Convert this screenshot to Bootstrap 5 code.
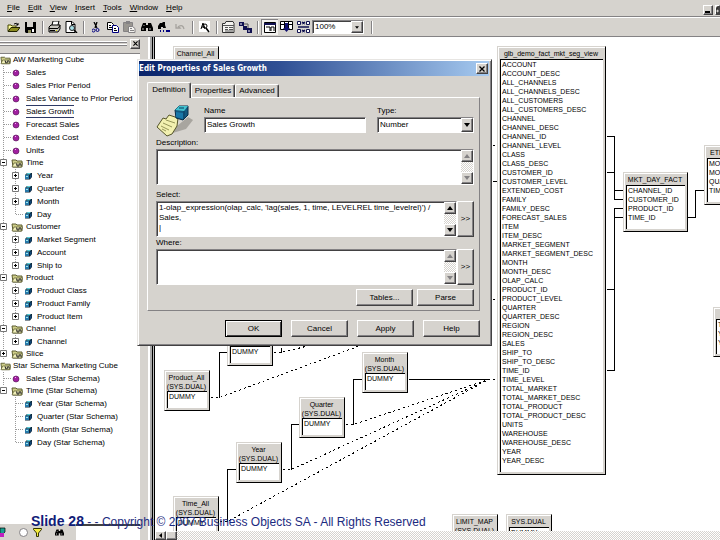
<!DOCTYPE html>
<html lang="en">
<head>
<meta charset="utf-8">
<meta name="viewport" content="width=device-width, initial-scale=1">
<title>Edit Properties of Sales Growth</title>
<link href="https://cdn.jsdelivr.net/npm/bootstrap@5.3.0/dist/css/bootstrap.min.css" rel="stylesheet">
<style>
:root{--face:#d6d3ce;--shade:#848284;--dark:#424142}
body{font:8px/12px "Liberation Sans",Arial,sans-serif;color:#000;background:var(--face);overflow:hidden}
ul{list-style:none;margin:0;padding:0}
svg{display:block;flex:none}
.menubar{height:17px;padding:0 0 0 7px;gap:8px;border-bottom:1px solid var(--shade)}
.menubar a{color:#000;text-decoration:none}
.menubar a::first-letter{text-decoration:underline}
.win-ctl{gap:2px}
.raised{background:var(--face);border:1px solid;border-color:#fff var(--dark) var(--dark) #fff;box-shadow:inset -1px -1px var(--shade);border-radius:0;padding:0;color:#000;display:flex;align-items:center;justify-content:center;font-size:8px;line-height:10px}
.win-ctl .raised{width:10px;height:10px}
.win-ctl .clipped{width:5px;overflow:hidden}
.tools{height:20px;padding-left:5px;border-top:1px solid #fff;border-bottom:1px solid var(--shade)}
.tool{width:17px;height:16px;border:0;padding:0;background:none;display:flex;align-items:center;justify-content:center}
.tool.on{background:#f2f1ee;box-shadow:inset 1px 1px var(--shade)}
.tsep{width:7px;height:13px;background:linear-gradient(90deg,var(--shade) 50%,#fff 50%) center/2px 100% no-repeat}
.sunken{background:#fff;border:1px solid;border-color:var(--shade) #fff #fff var(--shade);box-shadow:inset 1px 1px var(--dark)}
.sunken input,.sunken select,.sunken textarea{border:0;border-radius:0;background:transparent;padding:1px 2px;font-size:8px;line-height:10px;color:#000;appearance:none;resize:none;outline:0;min-width:0;min-height:0;box-shadow:none;overflow:hidden}
.zoomsel{width:52px;height:14px}
.arrow-btn{width:12px;flex:none}
.side{width:140px;flex:none}
.side-head{height:16px;gap:3px;padding:0 0 3px}
.grip{height:5px;border-top:1px solid #fff;border-bottom:1px solid var(--shade);box-shadow:inset 0 -1px #fff,inset 0 1px var(--shade)}
.side-head .raised{width:10px;height:10px}
.tree{background:#fff;border-top:1px solid var(--shade)}
.tree-row{display:flex;align-items:center;height:13px;white-space:nowrap}
.folder-row{height:12px}
.root-row{gap:2px}
.tree .slot{width:8px;flex:none}
.tree .pic{width:12px;flex:none;margin:0 3px}
.tree .sub .pic{width:8px;margin:0 5px 0 4px}
.tree .lvl{background:repeating-linear-gradient(#999 0 1px,#fff 1px 2px) 3px 0/1px 100% no-repeat}
.tree .sub{margin-left:12px;background:repeating-linear-gradient(#999 0 1px,transparent 1px 2px) 3px 0/1px calc(100% - 6px) no-repeat}
.leaf{height:1px;margin-left:4px;margin-right:-4px;background:repeating-linear-gradient(90deg,#999 0 1px,#fff 1px 2px)}
.chosen{border:solid #2d3a66;border-width:1px 0;line-height:11px}
.sidetabs{height:16px}
.sidetabs .strip{width:76px;background:var(--face);gap:5px}
.sidetabs .rest{background:#fff;border-top:2px solid var(--dark)}
.splitter{width:15px;flex:none;background:linear-gradient(90deg,var(--face) 0 8px,#fff 8px 10px,#aaa 10px 12px,#000 12px 13px,#bbb 13px 14px,#000 14px)}
.canvas{background:#fff}
.free{position:absolute}
.tbl{background:var(--face);border:1px solid;border-color:#d6d3ce #000 #000 #d6d3ce;box-shadow:inset 1px 1px #fff;padding:2px 2px 2px 1px;width:46px;font-size:7px;line-height:9px;text-align:center;white-space:nowrap;overflow:hidden}
.tbl h2{font-size:7px;line-height:9px;font-weight:400;margin:0;min-height:9px}
.tbl h2.one{padding-bottom:1px}
.tbl ul{background:#fff;border-top:1px solid #000;border-left:1px solid #000;text-align:left;padding:0 0 7px 1px;margin-left:1px}
.n-view{left:342px;top:9px;width:109px}
.n-mkt{left:468px;top:135px;width:65px}
.n-etd{left:549px;top:108px;width:64px}
.n-side{left:558px;top:270px;width:64px}
.n-channel{left:18px;top:9px}
.n-product{left:72px;top:288px}
.n-prodall{left:9px;top:333px}
.n-month{left:207px;top:315px}
.n-quarter{left:144px;top:360px}
.n-year{left:81px;top:405px}
.n-timeall{left:18px;top:459px}
.n-limit{left:297px;top:477px}
.n-dual{left:351px;top:477px}
.checker{background:repeating-conic-gradient(#d6d3ce 0 25%,#fff 0 50%) 0 0/2px 2px}
.hscroll{height:9px}
.hscroll .raised{width:11px}
.dlg{position:absolute;left:137px;top:59px;width:355px;background:var(--face);border:1px solid;border-color:#e7e5e2 var(--dark) var(--dark) #e7e5e2;box-shadow:inset 1px 1px #fff,inset -1px -1px var(--shade);padding:1px 2px 8px 1px}
.dlg-title{height:15px;background:linear-gradient(90deg,#0a246a,#2f4f94 40%,#a6caf0);color:#fff;padding:0 1px 0 0}
.dlg-title h1{font:bold 8px/15px "DejaVu Sans Condensed","DejaVu Sans",sans-serif;margin:0}
.dlg-title .raised{width:12px;height:11px}
.dlg-tabs{padding:6px 0 0 8px}
.dlg-tabs button{border:1px solid;border-color:#fff var(--dark) transparent #fff;border-bottom:0;box-shadow:inset -1px 0 var(--shade);border-radius:2px 2px 0 0;background:var(--face);padding:0;height:13px;width:44px;font-size:8px;line-height:12px;color:#000}
.dlg-tabs .cur{height:16px;margin-bottom:-1px;padding-bottom:2px;z-index:1;position:relative}
.pane{margin:0 9px 0 8px;border:1px solid;border-color:#fff var(--shade) var(--shade) #fff;padding:7px 5px 4px 8px}
.pane label{display:block;line-height:12px}
.line-field{height:16px}
.type-col{width:97px;margin-left:11px}
.area{height:36px}
.vbar{width:12px;flex:none}
.vbar .raised{height:12px;width:12px}
.more{width:17px}
.push{width:57px;height:17px}
.acts{padding:9px 9px 0 0;gap:9px}
.okbtn{border-color:#000;box-shadow:inset 1px 1px #fff,inset -1px -1px var(--dark)}
.credit{position:absolute;left:31px;bottom:10px;margin:0;color:#1b2a80;font-size:12px;line-height:16px;white-space:nowrap}
.credit strong{font-size:14px;color:#101c78}
</style>
<script src="https://cdn.jsdelivr.net/npm/bootstrap@5.3.0/dist/js/bootstrap.bundle.min.js"></script>
</head>
<body class="d-flex flex-column min-vh-100 position-relative">
<svg width="0" height="0" class="position-absolute" aria-hidden="true">
  <defs>
    <symbol id="folder" viewBox="0 0 12 10"><path d="M1 2h4l1 1h5v6H2z" fill="#cfcf8a" stroke="#5c5c30"/><path d="M3 5h9l-2 4H1z" fill="#f0efb8" stroke="#55552a" stroke-width=".7"/><path d="M5 6h1v2h2V6h2v2" fill="none" stroke="#222"/></symbol>
    <symbol id="ball" viewBox="0 0 12 10"><circle cx="5" cy="5" r="3" fill="#a020a0" stroke="#501050" stroke-width=".6"/><path d="M4 3h1v1H4z" fill="#ffb0ff"/></symbol>
    <symbol id="cube" viewBox="0 0 8 8"><path d="M1 3l2-2h5v4L6 7.500H1z" fill="#123"/><path d="M2 2.500L3.500 1H7L5.500 2.500z" fill="#5cd0dc"/><path d="M1 3h4v4H1z" fill="#2878a8"/><path d="M2 4h2v1H2z" fill="#9fe8ee"/><path d="M6 3l1.500-1v3L6 6.500z" fill="#104878"/></symbol>
    <symbol id="plus" viewBox="0 0 8 8"><path d="M.5.5h6v6h-6z" fill="#fff" stroke="#777"/><path d="M2 3.500h3M3.500 2v3" stroke="#000"/></symbol>
    <symbol id="minus" viewBox="0 0 8 8"><path d="M.5.5h6v6h-6z" fill="#fff" stroke="#777"/><path d="M2 3.500h3" stroke="#000"/></symbol>
    <symbol id="down" viewBox="0 0 6 4"><path d="M0 0h6L3 4z"/></symbol>
    <symbol id="up" viewBox="0 0 6 4"><path d="M0 4h6L3 0z"/></symbol>
    <symbol id="x" viewBox="0 0 6 6"><path d="M.5.5l5 5m0-5l-5 5" stroke="#000" stroke-width="1.300"/></symbol>
    <symbol id="binoc" viewBox="0 0 12 10"><path d="M2 1h3v2h2V1h3l2 5v3H7V6H5v3H0V6z"/><path d="M2 6v2M9 6v2M3 3v1" stroke="#fff" stroke-width=".7"/></symbol>
  </defs>
</svg>

<nav class="menubar d-flex align-items-center" aria-label="Main menu">
  <a href="#">File</a><a href="#">Edit</a><a href="#">View</a><a href="#">Insert</a><a href="#">Tools</a><a href="#">Window</a><a href="#">Help</a>
  <div class="win-ctl d-flex ms-auto mt-1">
    <button class="raised" aria-label="Minimize"><svg width="6" height="6"><path d="M0 4h5v2H0z"/></svg></button>
    <button class="raised clipped" aria-label="Restore"><svg width="6" height="8"><path d="M1 3h5v4H1zM2 3V1h4" fill="none" stroke="#000"/></svg></button>
  </div>
</nav>

<div class="tools d-flex align-items-center" role="toolbar" aria-label="Tools">
  <button class="tool" aria-label="Open"><svg width="13" height="11"><path d="M1 9V3h3l1 1h4v2" fill="#ffffa0" stroke="#444400"/><path d="M1 9.500l3-4h9l-3 4z" fill="#8c8c20" stroke="#222200"/><path d="M7 2q3-2 4 1m0 0V1m0 2H9" fill="none" stroke="#000"/></svg></button>
  <button class="tool" aria-label="Save"><svg width="11" height="11"><path d="M0 0h11v11H1L0 10z"/><path d="M2 0h6v5H2z" fill="#d6d3ce"/><path d="M3 8h3v3H3z" fill="#8b8b5a"/><path d="M7 7h2v3H7z" fill="#fff"/></svg></button>
  <span class="tsep"></span>
  <button class="tool" aria-label="Print"><svg width="13" height="12"><path d="M4 4l1-4h6l-1 4" fill="#fff" stroke="#000"/><path d="M1 6l2-2h9v4l-2 3H1z" fill="#c8c6c0" stroke="#000"/><path d="M1 7.500h9l2-3M2 9.500h5" fill="none" stroke="#000"/><path d="M8 9h1v1H8z" fill="#dd0"/></svg></button>
  <button class="tool" aria-label="Preview"><svg width="13" height="12"><path d="M1 .5h6l3 3v8H1z" fill="#fff" stroke="#000"/><path d="M6.500.5v3H10" fill="none" stroke="#000"/><circle cx="7" cy="7" r="2.500" fill="#a8e0e8" stroke="#222"/><path d="M9 9l3 3" stroke="#000" stroke-width="1.500"/></svg></button>
  <span class="tsep"></span>
  <button class="tool" aria-label="Cut"><svg width="8" height="11"><path d="M2 0l3 6M5 0L3 6" stroke="#000" stroke-width="1.300"/><circle cx="1.500" cy="8.500" r="1.500" fill="none" stroke="#000080"/><circle cx="5.500" cy="8" r="1.500" fill="none" stroke="#000080"/></svg></button>
  <button class="tool" aria-label="Copy"><svg width="12" height="11"><path d="M.5.500h4l2 2v5h-6z" fill="#fff" stroke="#000"/><path d="M5.500 3.500h4l2 2v5h-6z" fill="#fff" stroke="#000080"/><path d="M2 3.500h2M2 5.500h3M7 6.500h2M7 8.500h3" stroke="#000"/></svg></button>
  <button class="tool" aria-label="Paste"><svg width="13" height="12"><path d="M.5 1.500h9v9h-9z" fill="#999690" stroke="#848284"/><path d="M3 0h4v3H3z" fill="#848284"/><path d="M5.500 5.500h4l2.500 2v4H5.500z" fill="#f4f3f0" stroke="#848284"/><path d="M7 7.500h2M7 9.500h4" stroke="#848284"/></svg></button>
  <button class="tool" aria-label="Find"><svg width="12" height="10"><use href="#binoc"/></svg></button>
  <button class="tool" aria-label="Find next"><svg width="12" height="10"><path d="M2 1h2l1-1h2v3l1 3H5V5H3v2H0V4z"/><path d="M2 9h1m2 0h1m2 0h4" stroke="#000080" stroke-width="2"/></svg></button>
  <button class="tool" aria-label="Undo"><svg width="11" height="8"><path d="M1 1v4h4L3.500 3.500Q8 1 9 6" fill="none" stroke="#a6a39e" stroke-width="1.300"/></svg></button>
  <span class="tsep"></span>
  <button class="tool" aria-label="Check"><svg width="11" height="12"><path d="M0 0h11v11H0z" fill="#fff"/><path d="M2 8l2-6 2 6M3 6h3" fill="none" stroke="#000"/><circle cx="6" cy="5" r="2" fill="none" stroke="#000"/><path d="M7 7l3 4" stroke="#000" stroke-width="1.500"/></svg></button>
  <span class="tsep"></span>
  <button class="tool" aria-label="Table"><svg width="13" height="12"><path d="M.5 2.500H3l1-2h7l1 2v9H.500z" fill="#f4f3f0" stroke="#333"/><path d="M1 4.500h11M3 6.500h3M7 6.500h4M3 8.500h3M7 8.500h4M3 10h8" stroke="#555"/></svg></button>
  <button class="tool" aria-label="Join"><svg width="13" height="11"><path d="M0 0h5v4H0zM4 4h4v4H4zM8 6h5v5H8z" fill="#111150"/><path d="M1 2h2M9 9h2" stroke="#fff"/><path d="M5 2h4v4" fill="none" stroke="#555"/></svg></button>
  <span class="tsep"></span>
  <button class="tool on" aria-label="Structure pane"><svg width="12" height="11"><path d="M.5.5h11v10H.500z" fill="#fff" stroke="#000"/><path d="M0 2h12" stroke="#111150" stroke-width="2"/><path d="M2 5h4v4M7 9V5h3v4" fill="none" stroke="#000"/></svg></button>
  <button class="tool" aria-label="List mode"><svg width="13" height="12"><path d="M.5.5h12v8H.500z" fill="#fff" stroke="#000"/><path d="M4.500 0v8M8.500 0v8M0 3.500h13" stroke="#000"/><path d="M5 2h3v5h2l-3.500 4L3 7h2z" fill="#111170"/></svg></button>
  <button class="tool" aria-label="Arrange"><svg width="13" height="12"><path d="M.5.5h3v3h-3zM9.500.5h3v3h-3zM.5 8.500h3v3h-3zM9.500 8.500h3v3h-3z" fill="#fff" stroke="#111150"/><path d="M5 1l3 2M5 3l3-2M1 6h11M5 9l3 2M5 11l3-2" stroke="#111150" stroke-width="1.400"/></svg></button>
  <div class="sunken zoomsel d-flex"><select class="flex-grow-1 py-0" aria-label="Zoom"><option>100%</option></select><span class="raised arrow-btn"><svg width="4" height="3"><use href="#down"/></svg></span></div>
  <span class="tsep ms-1"></span>
</div>

<main class="d-flex flex-grow-1">
  <aside class="side d-flex flex-column">
    <div class="side-head d-flex align-items-center"><span class="grip flex-grow-1"></span><button class="raised" aria-label="Close panel"><svg width="5" height="5" viewBox="0 0 6 6"><use href="#x"/></svg></button></div>
    <div class="tree flex-grow-1">
      <div class="tree-row folder-row root-row"><svg width="11" height="10"><use href="#folder"/></svg><span>AW Marketing Cube</span></div>
      <ul class="lvl">
        <li class="tree-row"><span class="slot"><i class="leaf d-block"></i></span><svg class="pic" height="10"><use href="#ball"/></svg>Sales</li>
        <li class="tree-row"><span class="slot"><i class="leaf d-block"></i></span><svg class="pic" height="10"><use href="#ball"/></svg>Sales Prior Period</li>
        <li class="tree-row"><span class="slot"><i class="leaf d-block"></i></span><svg class="pic" height="10"><use href="#ball"/></svg>Sales Variance to Prior Period</li>
        <li class="tree-row"><span class="slot"><i class="leaf d-block"></i></span><svg class="pic" height="10"><use href="#ball"/></svg><span class="chosen">Sales Growth</span></li>
        <li class="tree-row"><span class="slot"><i class="leaf d-block"></i></span><svg class="pic" height="10"><use href="#ball"/></svg>Forecast Sales</li>
        <li class="tree-row"><span class="slot"><i class="leaf d-block"></i></span><svg class="pic" height="10"><use href="#ball"/></svg>Extended Cost</li>
        <li class="tree-row"><span class="slot"><i class="leaf d-block"></i></span><svg class="pic" height="10"><use href="#ball"/></svg>Units</li>
        <li><div class="tree-row folder-row"><svg class="slot" height="8"><use href="#minus"/></svg><svg class="pic" height="10"><use href="#folder"/></svg>Time</div>
          <ul class="sub">
            <li class="tree-row"><svg class="slot" height="8"><use href="#plus"/></svg><svg class="pic" height="8"><use href="#cube"/></svg>Year</li>
            <li class="tree-row"><svg class="slot" height="8"><use href="#plus"/></svg><svg class="pic" height="8"><use href="#cube"/></svg>Quarter</li>
            <li class="tree-row"><svg class="slot" height="8"><use href="#plus"/></svg><svg class="pic" height="8"><use href="#cube"/></svg>Month</li>
            <li class="tree-row"><span class="slot"><i class="leaf d-block"></i></span><svg class="pic" height="8"><use href="#cube"/></svg>Day</li>
          </ul></li>
        <li><div class="tree-row folder-row"><svg class="slot" height="8"><use href="#minus"/></svg><svg class="pic" height="10"><use href="#folder"/></svg>Customer</div>
          <ul class="sub">
            <li class="tree-row"><svg class="slot" height="8"><use href="#plus"/></svg><svg class="pic" height="8"><use href="#cube"/></svg>Market Segment</li>
            <li class="tree-row"><svg class="slot" height="8"><use href="#plus"/></svg><svg class="pic" height="8"><use href="#cube"/></svg>Account</li>
            <li class="tree-row"><svg class="slot" height="8"><use href="#plus"/></svg><svg class="pic" height="8"><use href="#cube"/></svg>Ship to</li>
          </ul></li>
        <li><div class="tree-row folder-row"><svg class="slot" height="8"><use href="#minus"/></svg><svg class="pic" height="10"><use href="#folder"/></svg>Product</div>
          <ul class="sub">
            <li class="tree-row"><svg class="slot" height="8"><use href="#plus"/></svg><svg class="pic" height="8"><use href="#cube"/></svg>Product Class</li>
            <li class="tree-row"><svg class="slot" height="8"><use href="#plus"/></svg><svg class="pic" height="8"><use href="#cube"/></svg>Product Family</li>
            <li class="tree-row"><svg class="slot" height="8"><use href="#plus"/></svg><svg class="pic" height="8"><use href="#cube"/></svg>Product Item</li>
          </ul></li>
        <li><div class="tree-row folder-row"><svg class="slot" height="8"><use href="#minus"/></svg><svg class="pic" height="10"><use href="#folder"/></svg>Channel</div>
          <ul class="sub">
            <li class="tree-row"><svg class="slot" height="8"><use href="#plus"/></svg><svg class="pic" height="8"><use href="#cube"/></svg>Channel</li>
          </ul></li>
        <li class="tree-row folder-row"><svg class="slot" height="8"><use href="#plus"/></svg><svg class="pic" height="10"><use href="#folder"/></svg>Slice</li>
      </ul>
      <div class="tree-row folder-row root-row"><svg width="11" height="10"><use href="#folder"/></svg><span>Star Schema Marketing Cube</span></div>
      <ul>
        <li class="tree-row lvl"><span class="slot"><i class="leaf d-block"></i></span><svg class="pic" height="10"><use href="#ball"/></svg>Sales (Star Schema)</li>
        <li><div class="tree-row folder-row"><svg class="slot" height="8"><use href="#minus"/></svg><svg class="pic" height="10"><use href="#folder"/></svg>Time (Star Schema)</div>
          <ul class="sub">
            <li class="tree-row"><span class="slot"><i class="leaf d-block"></i></span><svg class="pic" height="8"><use href="#cube"/></svg>Year (Star Schema)</li>
            <li class="tree-row"><span class="slot"><i class="leaf d-block"></i></span><svg class="pic" height="8"><use href="#cube"/></svg>Quarter (Star Schema)</li>
            <li class="tree-row"><span class="slot"><i class="leaf d-block"></i></span><svg class="pic" height="8"><use href="#cube"/></svg>Month (Star Schema)</li>
            <li class="tree-row"><span class="slot"><i class="leaf d-block"></i></span><svg class="pic" height="8"><use href="#cube"/></svg>Day (Star Schema)</li>
          </ul></li>
      </ul>
    </div>
    <div class="sidetabs d-flex">
      <div class="strip d-flex align-items-center">
        <svg width="14" height="12"><path d="M0 2h5v4l-2 2H0z" fill="#18a090" stroke="#000" stroke-width=".7"/><path d="M0 7h4v4H0z" fill="#c020c0"/></svg>
        <svg width="9" height="9"><circle cx="4.500" cy="4.500" r="4" fill="#fff" stroke="#848284"/></svg>
        <svg width="9" height="9"><path d="M.5.500h8v1L5.500 5v3.500h-2V5l-3-3.500z" fill="#f4ec40" stroke="#333300"/></svg>
        <svg width="9" height="9" class="ms-2" viewBox="0 0 12 10"><use href="#binoc"/></svg>
      </div>
      <div class="rest flex-grow-1"></div>
    </div>
  </aside>
  <div class="splitter"></div>

  <div class="d-flex flex-column flex-grow-1">
    <section class="canvas flex-grow-1 position-relative overflow-hidden" aria-label="Structure">
      <svg class="free" width="100%" height="100%" fill="none" stroke="#000" shape-rendering="crispEdges">
        <g transform="translate(-154.500 -36.500)">
          <path d="M606 136h8v63h9M606 172h8M614 190h9M606 289h8M606 370h8V208h9M614 217h9M687 217h8V190h9M492 181h5"/>
          <path d="M219 397V352h8M281 352v-5M362 379h-9v45M408 379h80M299 424h-8v45M236 469h-9v52"/>
          <path stroke-dasharray="2 3" d="M210 397h9L360 345M273 352h8l24-6M345 424h8L488 379h9M282 469h9L488 379M219 521h8L488 379M492 145h5M492 299h5"/>
        </g>
      </svg>
      <article class="free tbl n-channel"><h2>Channel_All</h2></article>
      <article class="free tbl n-view"><h2 class="one">glb_demo_fact_mkt_seg_view</h2>
        <ul><li>ACCOUNT</li><li>ACCOUNT_DESC</li><li>ALL_CHANNELS</li><li>ALL_CHANNELS_DESC</li><li>ALL_CUSTOMERS</li><li>ALL_CUSTOMERS_DESC</li><li>CHANNEL</li><li>CHANNEL_DESC</li><li>CHANNEL_ID</li><li>CHANNEL_LEVEL</li><li>CLASS</li><li>CLASS_DESC</li><li>CUSTOMER_ID</li><li>CUSTOMER_LEVEL</li><li>EXTENDED_COST</li><li>FAMILY</li><li>FAMILY_DESC</li><li>FORECAST_SALES</li><li>ITEM</li><li>ITEM_DESC</li><li>MARKET_SEGMENT</li><li>MARKET_SEGMENT_DESC</li><li>MONTH</li><li>MONTH_DESC</li><li>OLAP_CALC</li><li>PRODUCT_ID</li><li>PRODUCT_LEVEL</li><li>QUARTER</li><li>QUARTER_DESC</li><li>REGION</li><li>REGION_DESC</li><li>SALES</li><li>SHIP_TO</li><li>SHIP_TO_DESC</li><li>TIME_ID</li><li>TIME_LEVEL</li><li>TOTAL_MARKET</li><li>TOTAL_MARKET_DESC</li><li>TOTAL_PRODUCT</li><li>TOTAL_PRODUCT_DESC</li><li>UNITS</li><li>WAREHOUSE</li><li>WAREHOUSE_DESC</li><li>YEAR</li><li>YEAR_DESC</li></ul></article>
      <article class="free tbl n-mkt"><h2 class="one">MKT_DAY_FACT</h2><ul><li>CHANNEL_ID</li><li>CUSTOMER_ID</li><li>PRODUCT_ID</li><li>TIME_ID</li></ul></article>
      <article class="free tbl n-etd"><h2 class="one text-start ps-1">ETD_TIME</h2><ul><li>MONTH</li><li>MONTH_DESC</li><li>QUARTER</li><li>TIME_ID</li></ul></article>
      <article class="free tbl n-side"><h2 class="one"></h2><ul><li>TIME_ID</li><li>YEAR</li><li>YEAR_DESC</li></ul></article>
      <article class="free tbl n-product"><h2></h2><h2></h2><ul><li>DUMMY</li></ul></article>
      <article class="free tbl n-prodall"><h2>Product_All</h2><h2>(SYS.DUAL)</h2><ul><li>DUMMY</li></ul></article>
      <article class="free tbl n-month"><h2>Month</h2><h2>(SYS.DUAL)</h2><ul><li>DUMMY</li></ul></article>
      <article class="free tbl n-quarter"><h2>Quarter</h2><h2>(SYS.DUAL)</h2><ul><li>DUMMY</li></ul></article>
      <article class="free tbl n-year"><h2>Year</h2><h2>(SYS.DUAL)</h2><ul><li>DUMMY</li></ul></article>
      <article class="free tbl n-timeall"><h2>Time_All</h2><h2>(SYS.DUAL)</h2><ul><li>DUMMY</li></ul></article>
      <article class="free tbl n-limit"><h2>LIMIT_MAP</h2><h2>(SYS.DUAL)</h2></article>
      <article class="free tbl n-dual"><h2 class="one">SYS.DUAL</h2><ul><li>DUMMY</li></ul></article>
    </section>
    <div class="hscroll checker d-flex"><button class="raised" aria-label="Scroll left"><svg width="4" height="5"><path d="M3 0v5L0 2.500z"/></svg></button><span class="raised"></span></div>
  </div>
</main>

<form class="dlg" role="dialog" aria-labelledby="dlgTitle" onsubmit="return false">
  <div class="dlg-title d-flex align-items-center justify-content-between"><h1 id="dlgTitle">Edit Properties of Sales Growth</h1><button type="button" class="raised" aria-label="Close"><svg width="6" height="6"><use href="#x"/></svg></button></div>
  <div class="dlg-tabs d-flex align-items-end" role="tablist">
    <button type="button" role="tab" class="cur" aria-selected="true">Definition</button><button type="button" role="tab">Properties</button><button type="button" role="tab">Advanced</button>
  </div>
  <div class="pane d-flex flex-column">
    <div class="d-flex">
      <svg width="48" height="32" aria-hidden="true"><path d="M10 30l20-6 7-9-5-3z" fill="#a8a59f"/><path d="M1 22l6-9 3 1 3-4 9 3-1 8-5 8-5 2z" fill="#f2f0b0" stroke="#55552a"/><path d="M5 21l8 4M7 18l9 4M10 15l9 3M6 24l4 2" stroke="#96965a"/><path d="M19 5l4-4h9v9l-5 5-7-2z" fill="#125880" stroke="#062c48"/><path d="M19 5l4-4h9l-4 5z" fill="#43c2cf"/><path d="M20 7l7 1v6l-7-2z" fill="#1877a8"/><path d="M23 3h5M28 6v8" stroke="#0a3c60"/></svg>
      <div class="flex-grow-1"><label for="fName">Name</label><div class="sunken line-field d-flex"><input id="fName" class="w-100" value="Sales Growth"></div></div>
      <div class="type-col"><label for="fType">Type:</label><div class="sunken line-field d-flex"><select id="fType" class="flex-grow-1"><option>Number</option></select><span class="raised arrow-btn"><svg width="6" height="4"><use href="#down"/></svg></span></div></div>
    </div>
    <label for="fDesc">Description:</label>
    <div class="sunken area d-flex"><textarea id="fDesc" class="flex-grow-1"></textarea><span class="vbar checker d-flex flex-column justify-content-between"><span class="raised"><svg width="6" height="4" fill="#848284"><use href="#up"/></svg></span><span class="raised"><svg width="6" height="4" fill="#848284"><use href="#down"/></svg></span></span></div>
    <label for="fSel" class="mt-1">Select:</label>
    <div class="d-flex"><div class="sunken area d-flex flex-grow-1"><textarea id="fSel" class="flex-grow-1" wrap="off">1-olap_expression(olap_calc, 'lag(sales, 1, time, LEVELREL time_levelrel)') /
Sales,
|</textarea><span class="vbar d-flex flex-column justify-content-between checker"><span class="raised"><svg width="6" height="4"><use href="#up"/></svg></span><span class="raised"><svg width="6" height="4"><use href="#down"/></svg></span></span></div><button type="button" class="raised more">&gt;&gt;</button></div>
    <label for="fWhere">Where:</label>
    <div class="d-flex"><div class="sunken area d-flex flex-grow-1"><textarea id="fWhere" class="flex-grow-1"></textarea><span class="vbar checker d-flex flex-column justify-content-between"><span class="raised"><svg width="6" height="4" fill="#848284"><use href="#up"/></svg></span><span class="raised"><svg width="6" height="4" fill="#848284"><use href="#down"/></svg></span></span></div><button type="button" class="raised more">&gt;&gt;</button></div>
    <div class="d-flex justify-content-end gap-1 mt-1"><button type="button" class="raised push">Tables...</button><button type="button" class="raised push">Parse</button></div>
  </div>
  <div class="acts d-flex justify-content-end"><button class="raised push okbtn">OK</button><button type="button" class="raised push">Cancel</button><button type="button" class="raised push">Apply</button><button type="button" class="raised push">Help</button></div>
</form>

<p class="credit"><strong>Slide 28</strong> - - Copyright © 2007 Business Objects SA - All Rights Reserved</p>
</body>
</html>
